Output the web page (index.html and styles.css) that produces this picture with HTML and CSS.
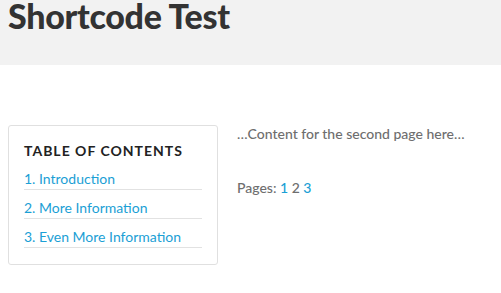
FILE: index.html
```html
<!DOCTYPE html>
<html lang="en">
<head>
  <meta charset="UTF-8" />
  <title>Shortcode Test</title>
  <link rel="stylesheet" href="styles.css">
</head>
<body>
  <header class="page-header">
    <h1>Shortcode Test</h1>
  </header>

  <div class="page-body">
    <aside class="toc">
      <h2>Table of Contents</h2>
      <ul>
        <li><a href="#">1. Introduction</a></li>
        <li><a href="#">2. More Information</a></li>
        <li><a href="#">3. Even More Information</a></li>
      </ul>
    </aside>

    <div class="entry">
      <p>…Content for the second page here…</p>
      <p class="pages">Pages: <a href="#">1</a> 2 <a href="#">3</a></p>
    </div>
  </div>
</body>
</html>
```

FILE: styles.css
```css
body {
  margin: 0;
  font-family: 'Lato', 'Liberation Sans', sans-serif;
  color: #777;
  background: #fff;
}
a {
  color: #1ba0d5;
  text-decoration: none;
}
.page-header {
  background: #f2f2f2;
  height: 65px;
  padding: 0 8px;
}
.page-header h1 {
  margin: 0;
  font-size: 34px;
  line-height: 32px;
  font-weight: 900;
  letter-spacing: -0.3px;
  color: #333;
}
.page-body {
  display: flex;
  align-items: flex-start;
  gap: 19px;
  padding: 60px 8px 0;
}
.toc {
  width: 178px;
  border: 1px solid #e0e0e0;
  border-radius: 3px;
  padding: 16px 15px;
}
.toc h2 {
  margin: 0 0 2px;
  font-size: 14px;
  font-weight: 700;
  letter-spacing: 1px;
  text-transform: uppercase;
  color: #222;
}
.toc ul {
  list-style: none;
  margin: 0;
  padding: 0;
}
.toc li {
  font-size: 14px;
  line-height: 18px;
  padding: 9px 0 1px;
  border-bottom: 1px solid #e2e2e2;
}
.entry {
  font-size: 14px;
  font-weight: 500;
  color: #6e6e6e;
}
.entry p {
  margin: 0 0 36px;
  line-height: 18px;
}
```
